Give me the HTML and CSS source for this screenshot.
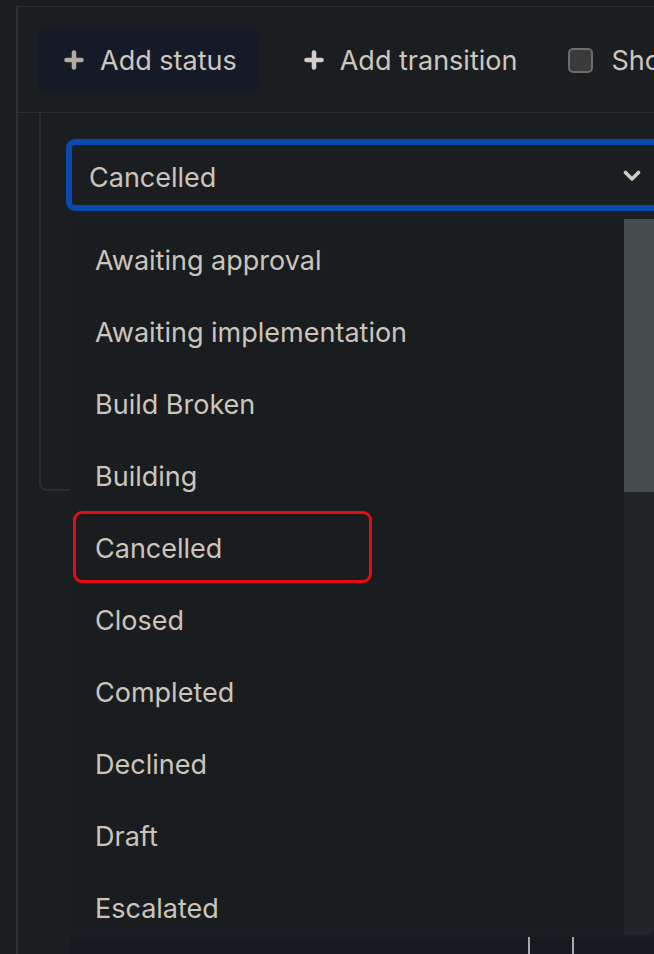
FILE: index.html
```html
<!DOCTYPE html>
<html lang="en">
<head>
<meta charset="utf-8">
<link rel="stylesheet" href="styles.css">
</head>
<body>
<div class="frame">
  <div class="toolbar">
    <button class="tb-btn tb-btn-primary">
      <svg class="plus" width="20" height="20" viewBox="0 0 20 20"><path d="M10 2.5v15M2.5 10h15" stroke="currentColor" stroke-width="4.6" stroke-linecap="round" fill="none"/></svg>
      <span>Add status</span>
    </button>
    <button class="tb-btn">
      <svg class="plus plus-light" width="20" height="20" viewBox="0 0 20 20"><path d="M10 2.5v15M2.5 10h15" stroke="currentColor" stroke-width="4.6" stroke-linecap="round" fill="none"/></svg>
      <span>Add transition</span>
    </button>
    <label class="check">
      <span class="box"></span>
      <span>Show transition labels</span>
    </label>
  </div>
  <div class="panel">
    <div class="select-wrap">
      <div class="select">
        <span>Cancelled</span>
        <svg class="chev" width="18" height="12" viewBox="0 0 18 12"><path d="M2.5 2.5l6.5 6.5 6.5-6.5" stroke="currentColor" stroke-width="3.6" stroke-linecap="round" stroke-linejoin="round" fill="none"/></svg>
      </div>
      <div class="menu">
        <ul class="options">
          <li>Awaiting approval</li>
          <li>Awaiting implementation</li>
          <li>Build Broken</li>
          <li>Building</li>
          <li class="marked">Cancelled</li>
          <li>Closed</li>
          <li>Completed</li>
          <li>Declined</li>
          <li>Draft</li>
          <li>Escalated</li>
        </ul>
        <div class="scrollbar"><div class="thumb"></div></div>
      </div>
    </div>
  </div>
  <div class="below">
    <span class="tick tick-a"></span>
    <span class="tick tick-b"></span>
  </div>
</div>
</body>
</html>
```

FILE: styles.css
```css
* { box-sizing: border-box; }
html, body {
  margin: 0;
  padding: 0;
  width: 654px;
  height: 954px;
  overflow: hidden;
  background: #1b1e21;
  font-family: Inter, "Noto Sans", sans-serif;
  color: #cbc5bd;
}
.frame {
  margin-top: 6px;
  margin-left: 16px;
  height: 948px;
  border-top: 1px solid #2d2e30;
  border-left: 2px solid #2d2e30;
  background: #1b1e21;
}
.toolbar {
  height: 106px;
  display: flex;
  align-items: flex-start;
  padding-top: 21px;
  padding-left: 20px;
  border-bottom: 1px solid #2d2e30;
  white-space: nowrap;
  overflow: hidden;
}
.tb-btn {
  height: 64px;
  display: flex;
  align-items: center;
  gap: 16px;
  padding: 0 22px 0 26px;
  border: 0;
  border-radius: 6px;
  background: transparent;
  color: #cdc7bf;
  font-family: inherit;
  font-size: 27px;
  margin-right: 19px;
  flex-shrink: 0;
}
.tb-btn-primary { background: #151a27; }
.plus { color: #b3aba1; flex-shrink: 0; }
.plus-light { color: #d3cec8; }
.check {
  display: flex;
  align-items: center;
  gap: 18px;
  height: 64px;
  font-size: 27px;
  color: #cdc7bf;
  margin-left: 10px;
  flex-shrink: 0;
}
.box {
  width: 25px;
  height: 25px;
  border: 2px solid #6c6c6c;
  border-radius: 5px;
  background: #3a3a3a;
  flex-shrink: 0;
}
.panel {
  margin-left: 21px;
  height: 378px;
  border-left: 2px solid #2b2e31;
  border-bottom: 2px solid #2b2e31;
  border-bottom-left-radius: 8px;
  padding: 26px 0 0 25px;
}
.select-wrap {
  position: relative;
}
.select {
  height: 72px;
  width: 640px;
  border: 6px solid #0a49ad;
  border-radius: 9px;
  display: flex;
  align-items: center;
  padding: 4px 0 0 17px;
  font-size: 27px;
  color: #cbc5bd;
  background: #1b1e21;
}
.chev {
  position: absolute;
  left: 557px;
  top: 31px;
  color: #cfcac3;
}
.menu {
  position: absolute;
  left: 4px;
  top: 80px;
  width: 584px;
  height: 716px;
  background: #1a1d1f;
  border-bottom-right-radius: 6px;
  overflow: hidden;
  display: flex;
}
.options {
  list-style: none;
  margin: 0;
  padding: 4px 0 0 0;
  flex: 1;
}
.options li {
  height: 72px;
  display: flex;
  align-items: center;
  padding: 2px 0 0 25px;
  font-size: 27px;
  color: #cbc5bd;
}
.options li.marked {
  margin-left: 3px;
  margin-right: 252px;
  padding-left: 19px;
  border: 3px solid #e20e12;
  border-radius: 9px;
}
.scrollbar {
  width: 30px;
  flex-shrink: 0;
  background: #222528;
  border-bottom-right-radius: 6px;
}
.thumb {
  height: 273px;
  background: #474c4f;
}
.below {
  margin-top: 446px;
  margin-left: 52px;
  height: 20px;
  background: #161a20;
  display: flex;
}
.tick {
  width: 2px;
  height: 20px;
  background: #a9a9a9;
}
.tick-a { margin-left: 458px; }
.tick-b { margin-left: 42px; }
```
